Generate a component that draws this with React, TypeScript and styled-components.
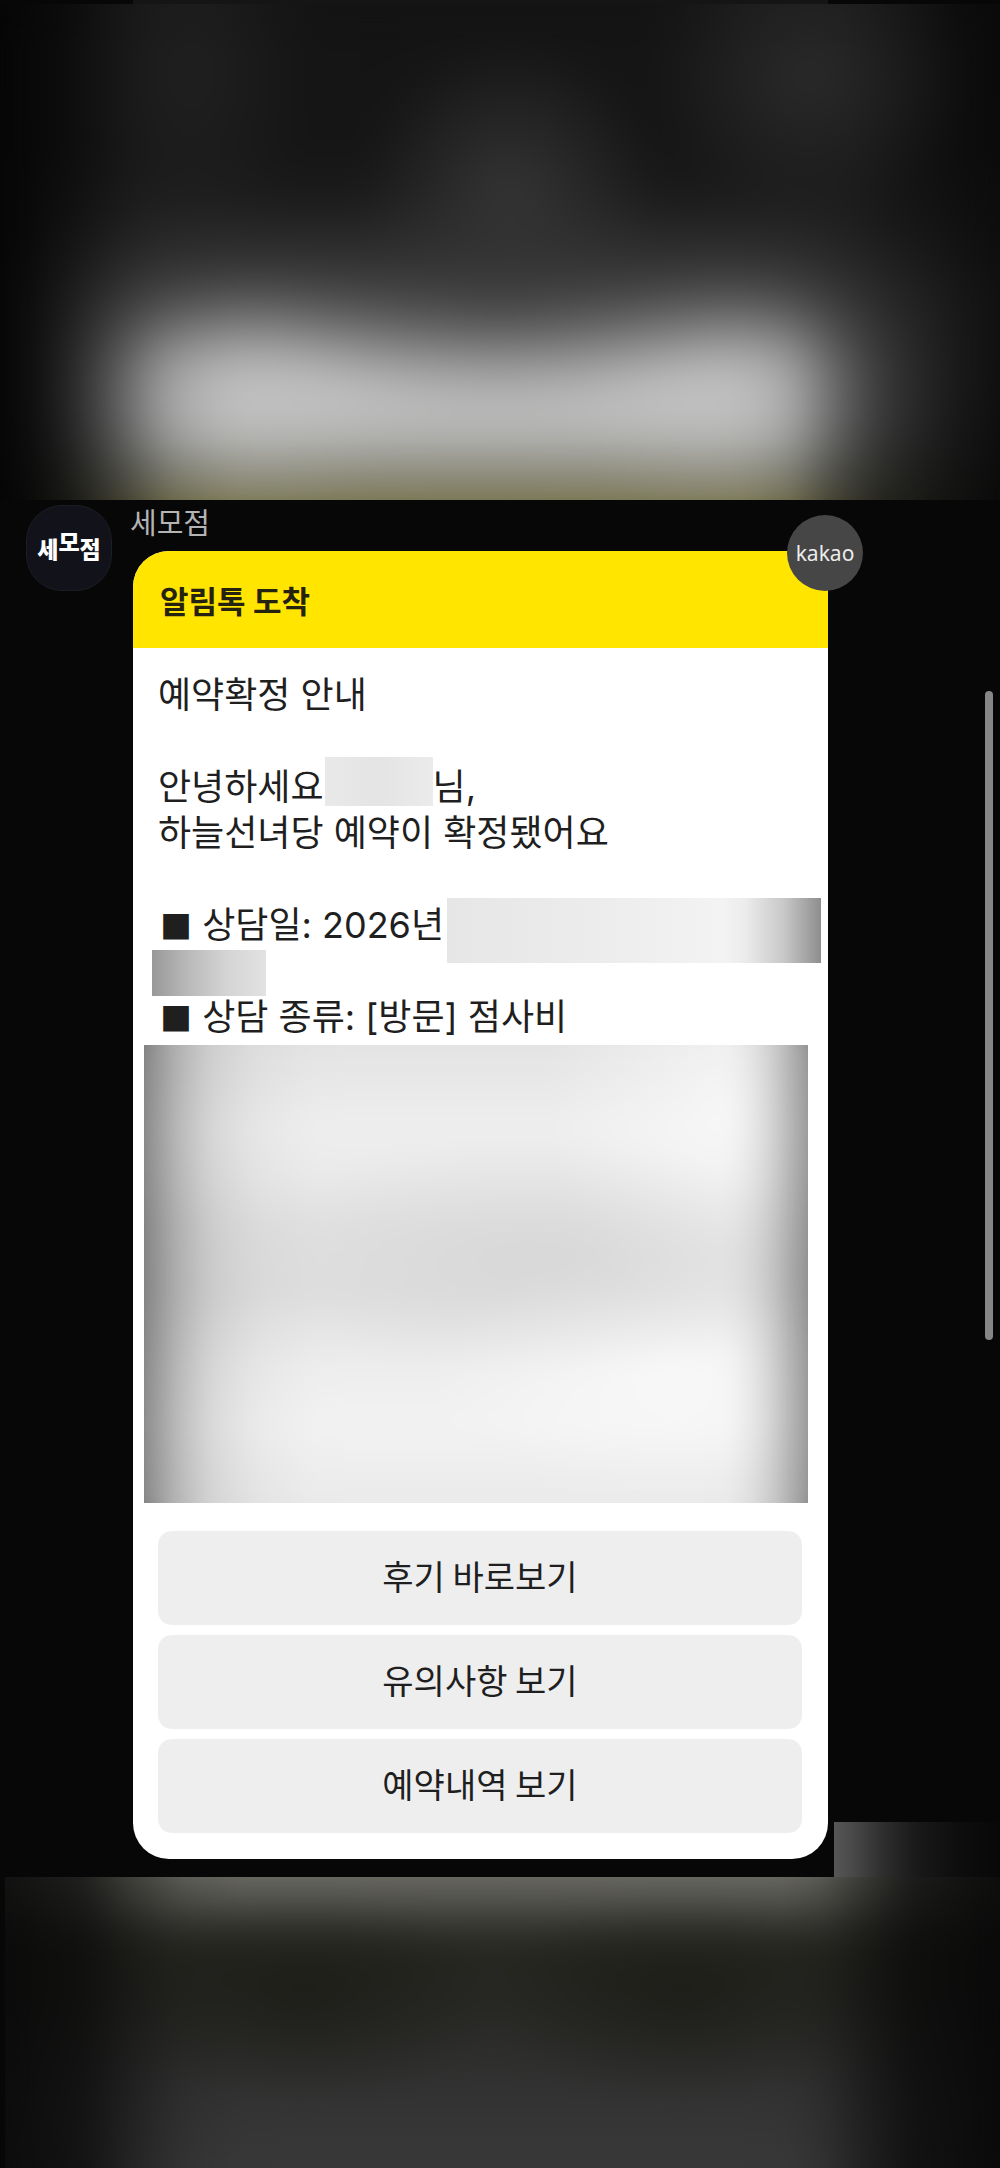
import React from "react";
import styled, { createGlobalStyle } from "styled-components";

const GlobalStyle = createGlobalStyle`
  *, *::before, *::after { box-sizing: border-box; }
  body {
    margin: 0;
    background: #070707;
    font-family: Inter, "Noto Sans CJK KR", sans-serif;
  }
`;

const Screen = styled.div`
  position: relative;
  display: flex;
  flex-direction: column;
  min-height: 100vh;
  background: #070707;
`;

const Soften = styled.div<{ $radius: number }>`
  position: absolute;
  inset: 0;
  backdrop-filter: blur(${(p) => p.$radius}px);
`;

const TopEdge = styled.div`
  position: absolute;
  inset: 0 0 auto;
  height: 4px;
  background: linear-gradient(90deg, #070707 13.3%, #151515 13.3%, #151515 82.8%, #070707 82.8%);
`;

const TopHaze = styled.div`
  position: relative;
  height: 500px;
  overflow: hidden;
  background:
    radial-gradient(ellipse 15% 30% at 51% 38%, rgba(62, 62, 62, 0.75), transparent),
    radial-gradient(ellipse 16% 30% at 81% 15%, rgba(52, 52, 52, 0.7), transparent),
    radial-gradient(ellipse 12% 40% at 19% 14%, rgba(44, 44, 44, 0.5), transparent),
    linear-gradient(90deg, #050505 0%, transparent 14%, transparent 84%, rgba(6, 6, 6, 0.7) 100%),
    linear-gradient(180deg, #141414 0%, #151515 30%, #1e1e1e 46%, #282828 60%, #202020 80%, #151515 100%);

  &::before {
    content: "";
    position: absolute;
    inset: 0;
    background: linear-gradient(
      180deg,
      rgba(60, 60, 60, 0) 40%,
      rgba(60, 60, 60, 0.6) 52%,
      #4c4c4c 59%,
      #7c7c7c 66%,
      #acacac 72%,
      #bebebe 78%,
      #bcbcbc 84%,
      #a8a8a6 90%,
      #8c8c80 94%,
      #77734a 100%
    );
    mask-image: linear-gradient(
      90deg,
      transparent 2%,
      rgba(0, 0, 0, 0.1) 7%,
      rgba(0, 0, 0, 0.42) 12%,
      rgba(0, 0, 0, 0.84) 17%,
      #000 23%,
      #000 74%,
      rgba(0, 0, 0, 0.88) 79%,
      rgba(0, 0, 0, 0.48) 83%,
      rgba(0, 0, 0, 0.18) 88%,
      rgba(0, 0, 0, 0.06) 94%,
      transparent
    );
  }

  &::after {
    content: "";
    position: absolute;
    inset: 0;
    background:
      radial-gradient(ellipse 24% 20% at 50% 62%, rgba(38, 38, 38, 0.4), transparent),
      radial-gradient(ellipse 15% 24% at 26% 79%, rgba(212, 212, 212, 0.2), transparent),
      radial-gradient(ellipse 15% 24% at 71% 79%, rgba(212, 212, 212, 0.2), transparent);
  }

  & > * {
    z-index: 1;
  }
`;

const BottomHaze = styled.div`
  position: relative;
  flex: 1 0 291px;
  margin-left: 5px;
  background:
    radial-gradient(ellipse 20% 36% at 30% 42%, rgba(22, 22, 16, 0.55), transparent),
    radial-gradient(ellipse 20% 36% at 68% 42%, rgba(22, 22, 16, 0.55), transparent),
    linear-gradient(
      90deg,
      rgba(8, 8, 8, 0.9) 0%,
      rgba(8, 8, 8, 0.75) 8%,
      rgba(8, 8, 8, 0.4) 13%,
      rgba(8, 8, 8, 0.1) 18%,
      transparent 24%,
      transparent 78%,
      rgba(8, 8, 8, 0.12) 82%,
      rgba(8, 8, 8, 0.45) 86%,
      rgba(8, 8, 8, 0.78) 91%,
      rgba(8, 8, 8, 0.95) 100%
    ),
    linear-gradient(
      180deg,
      #6c6c65 0%,
      #50504a 9%,
      #343430 17%,
      #272721 25%,
      #262623 38%,
      #2b2b29 54%,
      #313131 70%,
      #393939 100%
    );
`;

const Chat = styled.main`
  display: flex;
  align-items: flex-start;
  padding: 5px 0 0 26px;
`;

const Avatar = styled.div`
  flex: none;
  display: flex;
  align-items: center;
  justify-content: center;
  width: 86px;
  height: 86px;
  margin-right: 18px;
  border: 1px solid #1d1d24;
  border-radius: 36px;
  background: #12121b;
  color: #ffffff;
  font: 900 23px/24px "Noto Sans CJK KR", sans-serif;
`;

const Raised = styled.span`
  padding-bottom: 14px;
`;

const Message = styled.section`
  flex: 0 1 698px;
  min-width: 0;
  padding-bottom: 18px;
`;

const Sender = styled.h1`
  margin: 0;
  padding: 1px 0 9px;
  color: #b4b4b4;
  font-size: 29px;
  font-weight: 400;
  line-height: 36px;
`;

const Card = styled.article`
  position: relative;
  margin-left: 3px;
  border-radius: 36px;
  background: #ffffff;
  color: #1f1f1f;
`;

const CardHeader = styled.header`
  padding: 28px 27px 23px;
  border-radius: 36px 36px 0 0;
  background: #ffe500;
`;

const CardTitle = styled.h2`
  margin: 0;
  color: #25220f;
  font-size: 31px;
  font-weight: 700;
  line-height: 46px;
`;

const Badge = styled.span`
  position: absolute;
  top: -36px;
  right: -35px;
  display: flex;
  align-items: center;
  justify-content: center;
  width: 76px;
  height: 76px;
  border-radius: 50%;
  background: #464646;
  color: #ececec;
  font: 400 21px/28px "Noto Sans", sans-serif;
`;

const CardBody = styled.div`
  padding: 24px 26px 26px 25px;
`;

const Line = styled.p`
  display: flex;
  align-items: flex-start;
  height: 46px;
  margin: 0;
  font-size: 36px;
  line-height: 46px;
  white-space: pre;
`;

const Square = styled.span`
  padding-left: 2px;
  font-family: "Noto Sans CJK KR", sans-serif;
  font-size: 32px;
`;

const NameMask = styled.span`
  width: 108px;
  height: 49px;
  margin: -7px 0 0 1px;
  background: linear-gradient(90deg, #e9e9e9, #e4e4e4 50%, #ebebeb);
`;

const DateMask = styled.span`
  flex: 1;
  height: 65px;
  margin: -4px -19px 0 3px;
  background: linear-gradient(90deg, #e6e6e6 0%, #ececec 40%, #f3f3f3 74%, #ebebeb 80%, #c8c8c8 90%, #8e8e8e 100%);
`;

const TimeMask = styled.span`
  width: 114px;
  height: 46px;
  margin: 2px 0 0 -6px;
  background: linear-gradient(90deg, #989898 0%, #b8b8b8 30%, #d4d4d4 65%, #e2e2e2 100%);
`;

const DetailMask = styled.div`
  position: relative;
  height: 458px;
  margin: 5px -6px 28px -14px;
  background:
    linear-gradient(
      90deg,
      rgba(60, 60, 60, 0.6) 0%,
      rgba(80, 80, 80, 0.38) 4%,
      rgba(110, 110, 110, 0.18) 10%,
      rgba(120, 120, 120, 0.06) 17%,
      transparent 26%,
      transparent 88%,
      rgba(100, 100, 100, 0.1) 92%,
      rgba(80, 80, 80, 0.28) 96%,
      rgba(60, 60, 60, 0.52) 100%
    ),
    radial-gradient(ellipse 44% 26% at 58% 46%, rgba(208, 208, 208, 0.5), transparent),
    radial-gradient(ellipse 30% 50% at 90% 12%, rgba(255, 255, 255, 0.6), transparent),
    radial-gradient(ellipse 38% 26% at 80% 72%, rgba(255, 255, 255, 0.6), transparent),
    linear-gradient(180deg, #e3e3e3 0%, #eeeeee 18%, #ebebeb 27%, #e1e1e1 40%, #dfdfdf 54%, #ededed 70%, #f2f2f2 83%, #eaeaea 100%);
`;

const Actions = styled.nav`
  display: flex;
  flex-direction: column;
  gap: 10px;
`;

const ActionButton = styled.button`
  height: 94px;
  padding: 0 0 4px;
  border: 0;
  border-radius: 14px;
  background: #eeeeee;
  color: #1f1f1f;
  font: 400 34px/46px "Noto Sans CJK KR", sans-serif;
  cursor: pointer;
`;

const SideHaze = styled.div`
  flex: 1;
  align-self: flex-end;
  height: 55px;
  margin-left: 6px;
  background: linear-gradient(90deg, #575757 0%, #484848 12%, #2d2d2d 30%, #191919 50%, #0d0d0d 75%, #080808 100%);
`;

const ScrollThumb = styled.div`
  position: absolute;
  top: 691px;
  right: 7px;
  width: 8px;
  height: 649px;
  border-radius: 4px;
  background: #868686;
`;

const actions = ["후기 바로보기", "유의사항 보기", "예약내역 보기"];

export default function App() {
  return (
    <Screen>
      <GlobalStyle />
      <TopHaze>
        <Soften $radius={20} />
        <TopEdge />
      </TopHaze>
      <Chat>
        <Avatar>
          <span>세</span>
          <Raised>모</Raised>
          <span>점</span>
        </Avatar>
        <Message>
          <Sender>세모점</Sender>
          <Card>
            <CardHeader>
              <CardTitle>알림톡 도착</CardTitle>
            </CardHeader>
            <Badge>kakao</Badge>
            <CardBody>
              <Line>예약확정 안내</Line>
              <Line />
              <Line>
                안녕하세요
                <NameMask />
                님,
              </Line>
              <Line>하늘선녀당 예약이 확정됐어요</Line>
              <Line />
              <Line>
                <Square>■</Square>
                <span> 상담일: 2026년</span>
                <DateMask />
              </Line>
              <Line>
                <TimeMask />
              </Line>
              <Line>
                <Square>■</Square>
                <span> 상담 종류: [방문] 점사비</span>
              </Line>
              <DetailMask>
                <Soften $radius={10} />
              </DetailMask>
              <Actions>
                {actions.map((label) => (
                  <ActionButton key={label} type="button">
                    {label}
                  </ActionButton>
                ))}
              </Actions>
            </CardBody>
          </Card>
        </Message>
        <SideHaze />
      </Chat>
      <BottomHaze>
        <Soften $radius={14} />
      </BottomHaze>
      <ScrollThumb />
    </Screen>
  );
}
